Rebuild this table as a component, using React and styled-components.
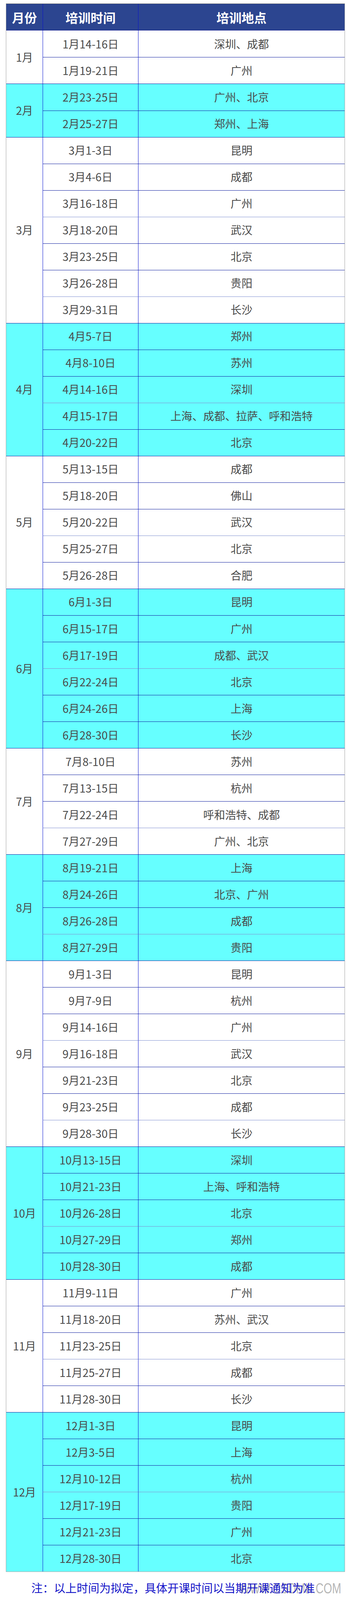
import React from "react";
import styled, { createGlobalStyle } from "styled-components";

// The reference is 4335px tall; the browser frame may be shorter, so every
// vertical size is expressed as a share of the viewport height.
const V = n => `calc(100vh * ${n} / 4335)`;

const GlobalStyle = createGlobalStyle`
  html, body {
    margin: 0;
    padding: 0;
    background: #fff;
    overflow: hidden;
  }
  body {
    font-family: "Microsoft YaHei", "Noto Sans CJK SC", "Noto Sans", sans-serif;
  }
`;

const Page = styled.div`
  height: 100vh;
  box-sizing: border-box;
  padding: ${V(10)} 0 0 15px;
  display: flex;
  flex-direction: column;
`;

const Grid = styled.div`
  width: 867px;
  box-sizing: border-box;
  display: grid;
  grid-template-columns: 93px 244px 1fr;
  grid-auto-rows: ${V(72)};
  border: 1px solid #a3a3a3;
  border-top-color: #707070;
`;

const HeadCell = styled.div`
  grid-column: ${props => props.$col};
  box-sizing: border-box;
  display: flex;
  align-items: center;
  justify-content: center;
  background: #2c4590;
  color: #fff;
  font-size: 32px;
  font-weight: 700;
  line-height: 1.2;
  border-left: ${props => (props.$col === 1 ? "none" : "1px solid #0a14c8")};
  border-bottom: 1px solid #0c1690;
`;

const Cell = styled.div`
  grid-column: ${props => props.$col};
  grid-row: ${props => (props.$span ? `span ${props.$span}` : "auto")};
  box-sizing: border-box;
  display: flex;
  align-items: center;
  justify-content: center;
  background: ${props => (props.$cyan ? "#66ffff" : "#ffffff")};
  color: #4a4a4a;
  font-size: 28px;
  line-height: 1.2;
  white-space: nowrap;
  border-left: ${props => (props.$col === 1 ? "none" : "1px solid #0a14d0")};
  border-top: ${props =>
    props.$first ? "none" : `1px solid ${props.$soft ? "#7f8fd0" : "#1020a0"}`};
`;

const Footer = styled.div`
  flex: 1;
  width: 885px;
  margin-left: -15px;
  display: flex;
  align-items: center;
  justify-content: center;
  position: relative;
  padding-top: ${V(8)};
  box-sizing: border-box;
`;

const Note = styled.div`
  position: relative;
  z-index: 2;
  color: #1414c8;
  font-size: 29px;
  line-height: 1.2;
`;

const Watermark = styled.div`
  position: absolute;
  left: 612px;
  top: ${V(26)};
  z-index: 1;
  font-family: "Liberation Sans", Arial, sans-serif;
  font-size: 36px;
  line-height: 1;
  color: rgba(150, 150, 150, 0.7);
  transform: scaleX(0.78);
  transform-origin: left center;
  white-space: nowrap;
`;

const schedule = [
  ["1月", [["1月14-16日", "深圳、成都"], ["1月19-21日", "广州"]]],
  ["2月", [["2月23-25日", "广州、北京"], ["2月25-27日", "郑州、上海"]]],
  ["3月", [
    ["3月1-3日", "昆明"], ["3月4-6日", "成都"], ["3月16-18日", "广州"],
    ["3月18-20日", "武汉"], ["3月23-25日", "北京"], ["3月26-28日", "贵阳"],
    ["3月29-31日", "长沙"],
  ]],
  ["4月", [
    ["4月5-7日", "郑州"], ["4月8-10日", "苏州"], ["4月14-16日", "深圳"],
    ["4月15-17日", "上海、成都、拉萨、呼和浩特"], ["4月20-22日", "北京"],
  ]],
  ["5月", [
    ["5月13-15日", "成都"], ["5月18-20日", "佛山"], ["5月20-22日", "武汉"],
    ["5月25-27日", "北京"], ["5月26-28日", "合肥"],
  ]],
  ["6月", [
    ["6月1-3日", "昆明"], ["6月15-17日", "广州"], ["6月17-19日", "成都、武汉"],
    ["6月22-24日", "北京"], ["6月24-26日", "上海"], ["6月28-30日", "长沙"],
  ]],
  ["7月", [
    ["7月8-10日", "苏州"], ["7月13-15日", "杭州"],
    ["7月22-24日", "呼和浩特、成都"], ["7月27-29日", "广州、北京"],
  ]],
  ["8月", [
    ["8月19-21日", "上海"], ["8月24-26日", "北京、广州"],
    ["8月26-28日", "成都"], ["8月27-29日", "贵阳"],
  ]],
  ["9月", [
    ["9月1-3日", "昆明"], ["9月7-9日", "杭州"], ["9月14-16日", "广州"],
    ["9月16-18日", "武汉"], ["9月21-23日", "北京"], ["9月23-25日", "成都"],
    ["9月28-30日", "长沙"],
  ]],
  ["10月", [
    ["10月13-15日", "深圳"], ["10月21-23日", "上海、呼和浩特"],
    ["10月26-28日", "北京"], ["10月27-29日", "郑州"], ["10月28-30日", "成都"],
  ]],
  ["11月", [
    ["11月9-11日", "广州"], ["11月18-20日", "苏州、武汉"],
    ["11月23-25日", "北京"], ["11月25-27日", "成都"], ["11月28-30日", "长沙"],
  ]],
  ["12月", [
    ["12月1-3日", "昆明"], ["12月3-5日", "上海"], ["12月10-12日", "杭州"],
    ["12月17-19日", "贵阳"], ["12月21-23日", "广州"], ["12月28-30日", "北京"],
  ]],
];

const App = () => (
  <>
    <GlobalStyle />
    <Page>
      <Grid>
        <HeadCell $col={1}>月份</HeadCell>
        <HeadCell $col={2}>培训时间</HeadCell>
        <HeadCell $col={3}>培训地点</HeadCell>
        {schedule.map(([month, items], mi) => {
          const cyan = mi % 2 === 1;
          const first = mi === 0;
          return (
            <React.Fragment key={month}>
              <Cell $col={1} $span={items.length} $cyan={cyan} $first={first}>
                {month}
              </Cell>
              {items.map(([date, place], i) => {
                const soft = i > 0 && i % 3 === 0;
                const top = first && i === 0;
                return (
                  <React.Fragment key={date}>
                    <Cell $col={2} $cyan={cyan} $soft={soft} $first={top}>{date}</Cell>
                    <Cell $col={3} $cyan={cyan} $soft={soft} $first={top}>{place}</Cell>
                  </React.Fragment>
                );
              })}
            </React.Fragment>
          );
        })}
      </Grid>
      <Footer>
        <Note>注：以上时间为拟定，具体开课时间以当期开课通知为准</Note>
        <Watermark>WWW.CSDMK.COM</Watermark>
      </Footer>
    </Page>
  </>
);

export default App;
